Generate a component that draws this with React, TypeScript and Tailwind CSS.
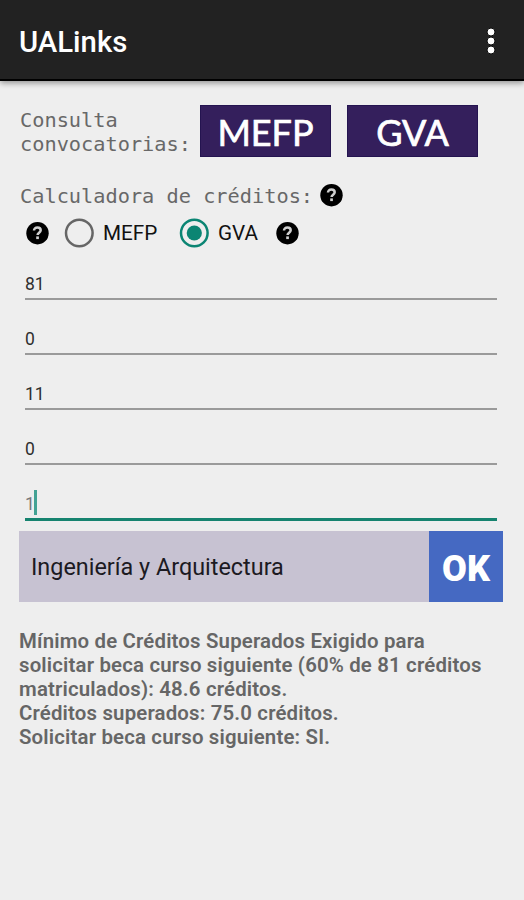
import React, { useState } from "react";
import clsx from "clsx";

type Organismo = "MEFP" | "GVA";

const campos = ["81", "0", "11", "0"];

const resultado = [
  "Mínimo de Créditos Superados Exigido para",
  "solicitar beca curso siguiente (60% de 81 créditos",
  "matriculados): 48.6 créditos.",
  "Créditos superados: 75.0 créditos.",
  "Solicitar beca curso siguiente: SI.",
];

const HelpIcon = () => (
  <svg width="24" height="24" viewBox="0 0 24 24" className="shrink-0">
    <circle cx="12.5" cy="12.2" r="11.2" fill="#000" />
    <path
      d="M9 9.6c0-1.9 1.4-3.1 3.4-3.1s3.3 1.1 3.3 2.8c0 2.3-3.1 2.4-3.1 4.6"
      fill="none"
      stroke="#cfcfcf"
      strokeWidth="2.5"
    />
    <rect x="11.2" y="15.4" width="2.7" height="2.7" fill="#cfcfcf" />
  </svg>
);

const RadioIcon = ({ checked }: { checked: boolean }) => (
  <svg width="30" height="30" viewBox="0 0 30 30" className="shrink-0">
    <circle
      cx="15.3"
      cy="15"
      r="13.3"
      fill="none"
      stroke={checked ? "#0b8573" : "#666666"}
      strokeWidth="2.5"
    />
    {checked && <circle cx="15.3" cy="15" r="7.6" fill="#0b8573" />}
  </svg>
);

const App = () => {
  const [organismo, setOrganismo] = useState<Organismo>("GVA");

  return (
    <div className="min-h-[900px] w-full bg-[#eeeeee] font-['Roboto',sans-serif]">
      <header className="flex h-[81px] items-center justify-between border-b-2 border-black bg-[#222222] pt-1 pr-[26px] pl-[19px] shadow-[0_2px_6px_rgba(0,0,0,0.4)]">
        <h1 className="pt-[2px] text-[29.3px] leading-none font-medium text-white">
          UALinks
        </h1>
        <button type="button" aria-label="Menú">
          <svg width="14" height="30" viewBox="0 0 14 30" fill="#fff" stroke="#0c0c0c" strokeWidth="1">
            <circle cx="7" cy="5" r="4" />
            <circle cx="7" cy="14" r="4" />
            <circle cx="7" cy="23" r="4" />
          </svg>
        </button>
      </header>

      <main className="pl-[20px]">
        <section className="flex h-[77px] pt-[24px]">
          <p className="w-[180px] pt-[3px] font-['DejaVu_Sans_Mono',monospace] text-[20.3px] leading-[24px] text-[#686868]">
            Consulta
            <br />
            convocatorias:
          </p>
          <div className="flex gap-[16px] font-['Lato',sans-serif] text-[36px] leading-none text-white [-webkit-text-stroke:0.7px_white]">
            <button type="button" className="h-[52px] w-[131px] border border-[#241450] bg-[#341f5c] pt-[2px]">
              MEFP
            </button>
            <button type="button" className="h-[52px] w-[131px] border border-[#241450] bg-[#341f5c] pt-[2px]">
              GVA
            </button>
          </div>
        </section>

        <section className="flex h-[60px] items-start gap-[6px] pt-[25px]">
          <p className="pt-px font-['DejaVu_Sans_Mono',monospace] text-[20.3px] leading-[24px] text-[#686868]">
            Calculadora de créditos:
          </p>
          <HelpIcon />
        </section>

        <section className="flex h-[30px] items-center pl-[5px] text-[20.7px] text-[#111]">
          <HelpIcon />
          <button
            type="button"
            onClick={() => setOrganismo("MEFP")}
            className="ml-[15px] flex w-[115px] items-center gap-[9px]"
          >
            <RadioIcon checked={organismo === "MEFP"} />
            <span className="pt-[2px]">MEFP</span>
          </button>
          <button
            type="button"
            onClick={() => setOrganismo("GVA")}
            className="flex w-[96px] items-center gap-[9px]"
          >
            <RadioIcon checked={organismo === "GVA"} />
            <span className="pt-[2px]">GVA</span>
          </button>
          <HelpIcon />
        </section>

        <section className="ml-[5px] w-[472px] pt-[19px] text-[17.5px] text-[#2f2f2f]">
          {campos.map((valor, i) => (
            <div
              key={i}
              className={clsx(
                "flex items-end border-b-2 border-[#9a9a9a] pb-[3px] leading-[21px]",
                i === 0 ? "h-[33px]" : "h-[55px]"
              )}
            >
              {valor}
            </div>
          ))}
          <div className="flex h-[56px] items-end border-b-[3px] border-[#16836f] leading-[21px] text-[#777]">
            <span className="pb-[3px]">1</span>
            <span className="mb-[3px] -ml-px h-[25px] w-[3px] bg-[#43a294]" />
          </div>
        </section>

        <section className="-ml-px mt-[10px] flex h-[71px] w-[484px]">
          <div className="flex w-[410px] items-center bg-[#c7c2d2] pt-[3px] pl-[12px] text-[23.4px] text-[#1c1a22]">
            Ingeniería y Arquitectura
          </div>
          <button type="button" className="flex-1 bg-[#4569c2] pt-[4px] text-[36px] font-black text-white">
            OK
          </button>
        </section>

        <section className="-ml-px pt-[27px] text-[20.4px] leading-[24.1px] font-semibold tracking-[0.17px] whitespace-nowrap text-[#666]">
          {resultado.map((linea) => (
            <p key={linea}>{linea}</p>
          ))}
        </section>
      </main>
    </div>
  );
};

export default App;
